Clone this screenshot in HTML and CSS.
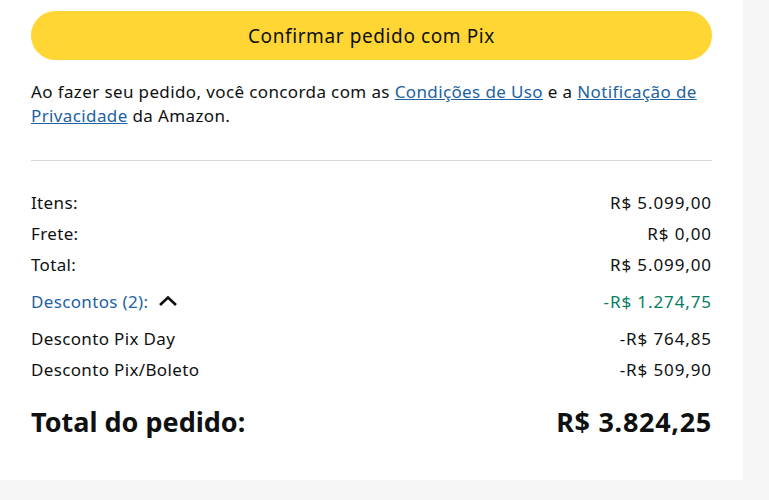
FILE: index.html
```html
<!DOCTYPE html>
<html lang="pt-BR">
<head>
    <meta charset="UTF-8">
    <meta name="viewport" content="width=device-width, initial-scale=1.0">
    <title>Finalizar pedido</title>
    <link rel="stylesheet" href="styles.css">
</head>
<body>
    <section class="checkout">
        <button class="place-order">Confirmar pedido com Pix</button>
        <p class="terms">
            Ao fazer seu pedido, você concorda com as <a href="#">Condições de Uso</a> e a <a href="#">Notificação de Privacidade</a> da Amazon.
        </p>
        <hr class="divider">
        <ul class="summary">
            <li class="row"><span>Itens:</span><span class="amount">R$ 5.099,00</span></li>
            <li class="row"><span>Frete:</span><span class="amount">R$ 0,00</span></li>
            <li class="row"><span>Total:</span><span class="amount">R$ 5.099,00</span></li>
            <li class="row discounts">
                <span class="toggle">Descontos (2):
                    <svg class="chevron" width="20" height="10" viewBox="0 0 20 10"><path d="M2 9 L10 1.5 L18 9" fill="none" stroke="#0f1111" stroke-width="2.6"/></svg>
                </span>
                <span class="amount saving">-R$ 1.274,75</span>
            </li>
            <li class="row"><span>Desconto Pix Day</span><span class="amount">-R$ 764,85</span></li>
            <li class="row"><span>Desconto Pix/Boleto</span><span class="amount">-R$ 509,90</span></li>
        </ul>
        <div class="order-total">
            <span>Total do pedido:</span>
            <span class="amount">R$ 3.824,25</span>
        </div>
    </section>
</body>
</html>
```

FILE: styles.css
```css
body {
    margin: 0;
    background-color: #f5f5f5;
    font-family: "Noto Sans", "Liberation Sans", sans-serif;
    color: #0f1111;
}
.checkout {
    width: 681px;
    height: 469px;
    padding: 11px 31px 0;
    background-color: #fff;
}
.place-order {
    display: block;
    width: 100%;
    height: 49px;
    background-color: #ffd633;
    border: none;
    border-radius: 25px;
    font-family: inherit;
    font-size: 19px;
    letter-spacing: 0.6px;
    color: #0f1111;
    cursor: pointer;
}
.terms {
    margin: 20px 0 0;
    font-size: 17px;
    line-height: 24px;
    letter-spacing: 0.38px;
}
.terms a {
    color: #2162a1;
    text-decoration: underline;
}
.divider {
    margin: 32px 0 0;
    border: none;
    border-top: 1px solid #d5d9d9;
}
.summary {
    list-style: none;
    margin: 30px 0 0;
    padding: 0;
}
.row {
    display: flex;
    justify-content: space-between;
    align-items: center;
    font-size: 17px;
    line-height: 24px;
    letter-spacing: 0.35px;
    margin-bottom: 7px;
}
.amount {
    letter-spacing: 0.9px;
}
.discounts {
    margin: 13px 0 13px;
}
.toggle {
    display: flex;
    align-items: center;
    gap: 10px;
    color: #2162a1;
}
.chevron {
    margin-top: -3px;
}
.saving {
    color: #067d62;
}
.order-total {
    display: flex;
    justify-content: space-between;
    margin-top: 23px;
    font-size: 27px;
    font-weight: bold;
    line-height: 34px;
}
.order-total .amount {
    letter-spacing: 0.7px;
}
```
